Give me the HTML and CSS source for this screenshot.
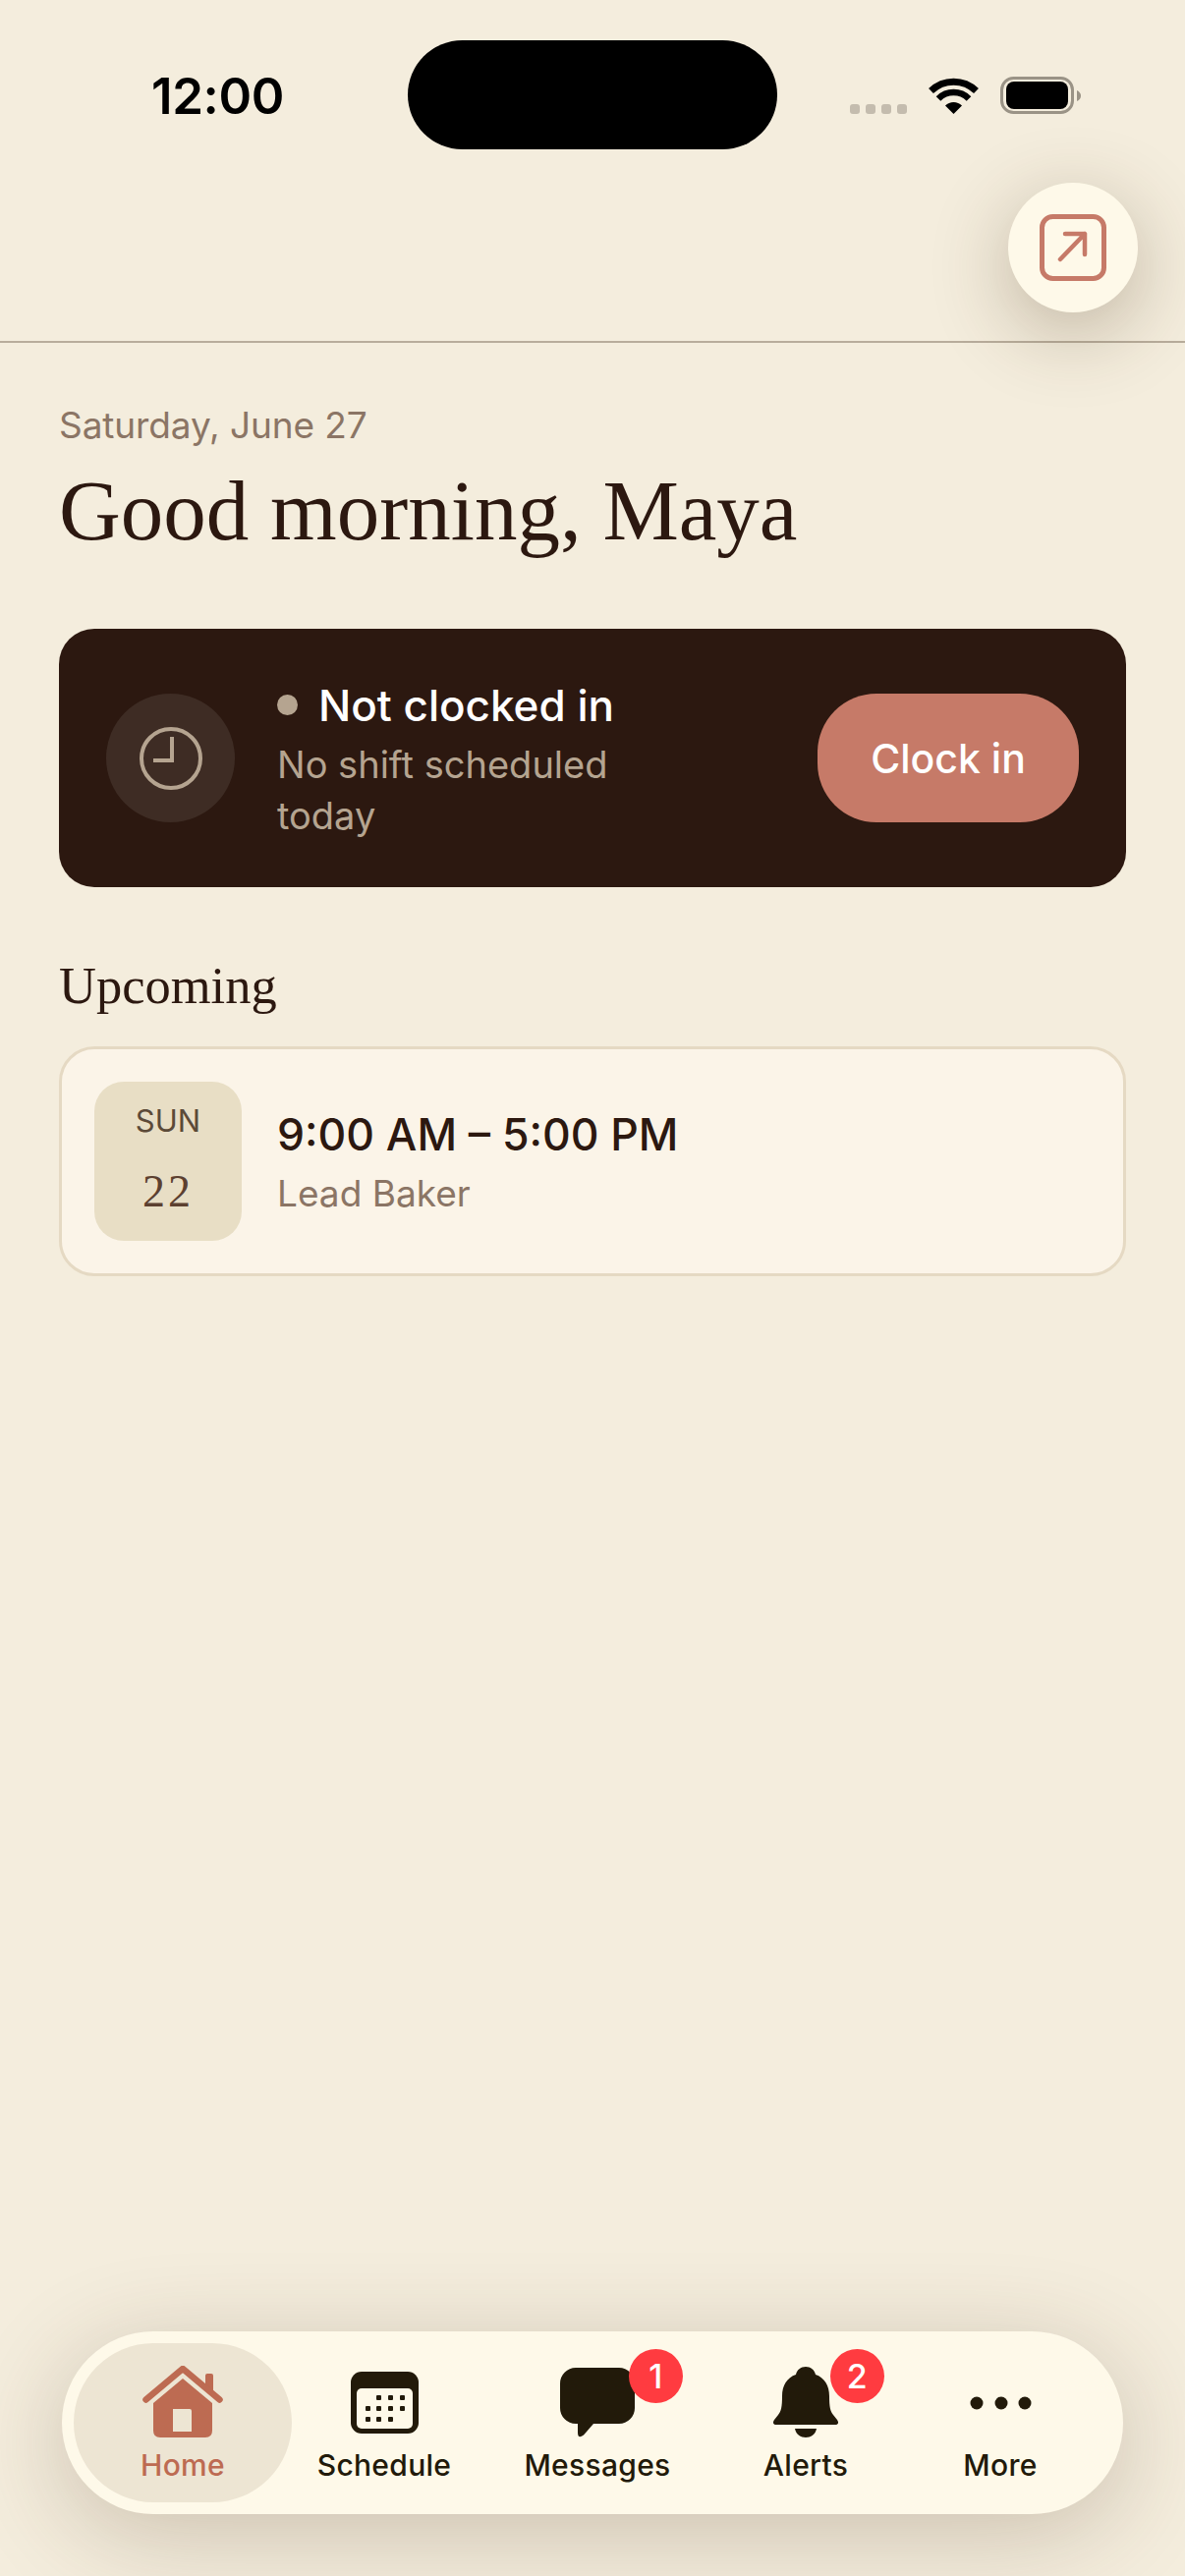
FILE: index.html
```html
<!DOCTYPE html>
<html lang="en">
<head>
    <meta charset="UTF-8">
    <meta name="viewport" content="width=device-width, initial-scale=1.0">
    <title>Home</title>
    <link rel="stylesheet" href="styles.css">
</head>
<body>
<div class="screen">
    <header class="top">
        <div class="status-bar">
            <div class="time">12:00</div>
            <div class="island"></div>
            <div class="status-icons">
                <div class="signal"><span></span><span></span><span></span><span></span></div>
                <svg class="wifi" width="51" height="37" viewBox="0 0 51 37">
                    <path d="M25.5 37 L17 28.5 A12 12 0 0 1 34 28.5 Z" fill="#000"/>
                    <path d="M10 21.5 A22 22 0 0 1 41 21.5" fill="none" stroke="#000" stroke-width="6.5"/>
                    <path d="M2.5 13.5 A33 33 0 0 1 48.5 13.5" fill="none" stroke="#000" stroke-width="7"/>
                </svg>
                <svg class="battery" width="82" height="38" viewBox="0 0 82 38">
                    <rect x="1.5" y="1.5" width="72" height="35" rx="12" fill="none" stroke="#9a9386" stroke-width="3"/>
                    <rect x="6" y="5" width="63" height="28" rx="8" fill="#000"/>
                    <path d="M78 14 Q82 16 82 19.500 Q82 23 78 25 Z" fill="#9a9386"/>
                </svg>
            </div>
        </div>
    </header>

    <button class="fab">
        <svg width="68" height="68" viewBox="0 0 68 68" fill="none" stroke="#c67a68" stroke-linecap="round" stroke-linejoin="round">
            <rect x="2.500" y="2.500" width="63" height="63" rx="11" stroke-width="5"/>
            <path d="M21 46 L46 20 M26 20 H46 V41" stroke-width="4.500"/>
        </svg>
    </button>

    <main class="content">
        <p class="date">Saturday, June 27</p>
        <h1 class="greeting">Good morning, Maya</h1>

        <section class="clock-card">
            <div class="clock-icon">
                <svg width="64" height="66" viewBox="0 0 64 66" fill="none" stroke="#b5a490" stroke-width="4">
                    <circle cx="32" cy="33" r="30"/>
                    <path d="M33 11 V35 H14"/>
                </svg>
            </div>
            <div class="clock-info">
                <div class="clock-status"><span class="status-dot"></span>Not clocked in</div>
                <div class="clock-sub">No shift scheduled today</div>
            </div>
            <button class="clock-btn">Clock in</button>
        </section>

        <h2 class="section-title">Upcoming</h2>
        <section class="shift-card">
            <div class="shift-date">
                <span class="shift-day">SUN</span>
                <span class="shift-num">22</span>
            </div>
            <div>
                <div class="shift-time">9:00 AM – 5:00 PM</div>
                <div class="shift-role">Lead Baker</div>
            </div>
        </section>
    </main>

    <nav class="tabbar">
        <div class="tab active">
            <svg class="tab-icon" width="82" height="73" viewBox="0 0 82 73">
                <path d="M64 24 V10 Q64 8 66 8 H70 Q72 8 72 10 V28 Z" fill="#bd6b52"/>
                <path d="M3.500 34.500 L41 3 L78.500 34.500" fill="none" stroke="#bd6b52" stroke-width="6.500" stroke-linecap="round" stroke-linejoin="round"/>
                <path d="M41 13 L71 38 V66 Q71 73 64 73 H18 Q11 73 11 66 V38 Z M31 44 V67 H50 V46 Q50 44 48 44 Z" fill="#bd6b52" fill-rule="evenodd"/>
            </svg>
            <span>Home</span>
        </div>
        <div class="tab">
            <svg class="tab-icon calendar-icon" width="69" height="63" viewBox="0 0 69 63">
                <rect width="69" height="63" rx="11" fill="#221a0a"/>
                <rect x="6" y="17" width="57" height="41" rx="5" fill="#fef9e9"/>
                <g fill="#221a0a">
                    <rect x="26" y="24" width="5" height="5" rx="1"/><rect x="38" y="24" width="5" height="5" rx="1"/><rect x="50" y="24" width="5" height="5" rx="1"/>
                    <rect x="15" y="35" width="5" height="5" rx="1"/><rect x="26" y="35" width="5" height="5" rx="1"/><rect x="38" y="35" width="5" height="5" rx="1"/><rect x="50" y="35" width="5" height="5" rx="1"/>
                    <rect x="15" y="46" width="5" height="5" rx="1"/><rect x="26" y="46" width="5" height="5" rx="1"/><rect x="38" y="46" width="5" height="5" rx="1"/>
                </g>
            </svg>
            <span>Schedule</span>
        </div>
        <div class="tab">
            <svg class="tab-icon" width="76" height="71" viewBox="0 0 76 71">
                <path d="M16 0 H60 A16 16 0 0 1 76 16 V41 A16 16 0 0 1 60 57 H34 L24 68.500 Q18 73 18 66 V57 H16 A16 16 0 0 1 0 41 V16 A16 16 0 0 1 16 0 Z" fill="#221a0a"/>
            </svg>
            <span>Messages</span>
            <b class="badge badge-msg">1</b>
        </div>
        <div class="tab">
            <svg class="tab-icon" width="66" height="72" viewBox="0 0 66 72" fill="#221a0a">
                <path d="M33 0 C38 0 42 3 43 8 C52 11 57 19 57 30 C57 41 58 45 61 49 L65 54 C67 57 66 59 63 59 H3 C0 59 -1 57 1 54 L5 49 C8 45 9 41 9 30 C9 19 14 11 23 8 C24 3 28 0 33 0 Z"/>
                <path d="M22 63 H44 C43 69 38 72 33 72 C28 72 23 69 22 63 Z"/>
            </svg>
            <span>Alerts</span>
            <b class="badge badge-alert">2</b>
        </div>
        <div class="tab">
            <svg class="tab-icon more-icon" width="63" height="14" viewBox="0 0 63 14" fill="#221a0a">
                <circle cx="7" cy="7" r="6.500"/><circle cx="32" cy="7" r="6.500"/><circle cx="56" cy="7" r="6.500"/>
            </svg>
            <span>More</span>
        </div>
    </nav>
</div>
</body>
</html>
```

FILE: styles.css
```css
* {
    box-sizing: border-box;
}

body {
    margin: 0;
    background: #f4eddd;
    font-family: "Inter", "Liberation Sans", sans-serif;
}

.screen {
    position: relative;
    width: 1206px;
    height: 2622px;
    overflow: hidden;
    background: #f4eddd;
}

/* status bar */
.top {
    height: 349px;
    border-bottom: 2px solid #b8ad9c;
}

.status-bar {
    display: flex;
    align-items: flex-start;
    padding: 41px 0 0 154px;
}

.time {
    width: 261px;
    margin-top: 29px;
    font-size: 51px;
    line-height: 56px;
    font-weight: 600;
    letter-spacing: -0.4px;
    color: #000;
}

.island {
    width: 376px;
    height: 111px;
    border-radius: 56px;
    background: #000;
}

.status-icons {
    display: flex;
    align-items: flex-end;
    margin: 37px 0 0 74px;
}

.signal {
    display: flex;
    gap: 6px;
}

.signal span {
    width: 10px;
    height: 10px;
    border-radius: 3px;
    background: #c4bcae;
}

.wifi {
    margin-left: 22px;
}

.battery {
    margin-left: 22px;
}

.fab {
    position: absolute;
    top: 186px;
    left: 1026px;
    display: flex;
    align-items: center;
    justify-content: center;
    width: 132px;
    height: 132px;
    padding: 0;
    border: none;
    border-radius: 50%;
    background: #fef9e9;
    box-shadow: 0 20px 80px rgba(70, 45, 20, 0.3);
}

/* main */
.content {
    padding: 60px 60px 0;
}

.date {
    margin: 0;
    font-size: 37px;
    line-height: 48px;
    letter-spacing: -0.1px;
    color: #8b7565;
}

.greeting {
    margin: 15px 0 0;
    font-family: "Liberation Serif", serif;
    font-size: 87px;
    line-height: 96px;
    font-weight: 400;
    color: #2c1810;
}

.clock-card {
    display: flex;
    align-items: center;
    height: 263px;
    margin-top: 72px;
    padding: 0 48px;
    border-radius: 36px;
    background: #2c1810;
}

.clock-icon {
    display: flex;
    align-items: center;
    justify-content: center;
    flex: none;
    width: 131px;
    height: 131px;
    border-radius: 50%;
    background: #3e2c24;
}

.clock-info {
    width: 350px;
    margin-left: 43px;
}

.clock-status {
    display: flex;
    align-items: center;
    margin-top: 2px;
    font-size: 44px;
    line-height: 56px;
    font-weight: 450;
    color: #fff;
}

.status-dot {
    width: 21px;
    height: 21px;
    margin-right: 21px;
    border-radius: 50%;
    background: #b5a490;
}

.clock-sub {
    margin-top: 6px;
    font-size: 38px;
    line-height: 52px;
    color: #b5a490;
}

.clock-btn {
    flex: none;
    width: 266px;
    height: 131px;
    margin-left: auto;
    padding: 0;
    border: none;
    border-radius: 60px;
    background: #c67a68;
    font-family: inherit;
    font-size: 41px;
    font-weight: 450;
    color: #fff;
}

.section-title {
    margin: 62px 0 0;
    font-family: "Liberation Serif", serif;
    font-size: 52.500px;
    line-height: 76px;
    font-weight: 400;
    color: #2c1810;
}

.shift-card {
    display: flex;
    align-items: center;
    height: 234px;
    margin-top: 24px;
    padding: 0 33px;
    border: 3px solid #e5d9c3;
    border-radius: 36px;
    background: #fbf4e8;
}

.shift-date {
    display: flex;
    flex-direction: column;
    align-items: center;
    flex: none;
    width: 150px;
    height: 162px;
    margin-right: 36px;
    border-radius: 30px;
    background: #e8dec5;
    color: #5c4a38;
}

.shift-day {
    margin-top: 20px;
    font-size: 31px;
    line-height: 40px;
}

.shift-num {
    margin-top: 28px;
    font-family: "Liberation Serif", serif;
    font-size: 46px;
    line-height: 48px;
    letter-spacing: 3px;
    color: #5c4030;
}

.shift-time {
    margin-top: 2px;
    font-size: 44.500px;
    line-height: 56px;
    font-weight: 450;
    color: #2c1810;
}

.shift-role {
    margin-top: 8px;
    font-size: 37px;
    line-height: 48px;
    color: #8b7565;
}

/* tab bar */
.tabbar {
    position: absolute;
    left: 63px;
    top: 2373px;
    display: grid;
    grid-template-columns: 222px 188px 246px 178px 218px;
    width: 1080px;
    height: 186px;
    padding: 12px 0 0 12px;
    border-radius: 93px;
    background: #fef9e9;
    box-shadow: 0 20px 100px rgba(70, 45, 20, 0.23);
}

.tab {
    position: relative;
    display: flex;
    flex-direction: column;
    align-items: center;
    justify-content: flex-end;
    height: 162px;
    padding-bottom: 20px;
    font-size: 30px;
    line-height: 36px;
    font-weight: 450;
    letter-spacing: 0.3px;
    color: #221a0a;
}

.tab.active {
    border-radius: 81px;
    background: #ede5d3;
    color: #bd6b52;
}

.tab-icon {
    margin-bottom: 10px;
}

.calendar-icon {
    margin-bottom: 14px;
}

.more-icon {
    margin-bottom: 38px;
}

.badge {
    position: absolute;
    top: 6px;
    width: 55px;
    height: 55px;
    border-radius: 50%;
    background: #ff3b40;
    font-size: 34px;
    line-height: 55px;
    font-weight: 500;
    text-align: center;
    color: #fff;
}

.badge-msg {
    left: 155px;
}

.badge-alert {
    left: 114px;
}
```
